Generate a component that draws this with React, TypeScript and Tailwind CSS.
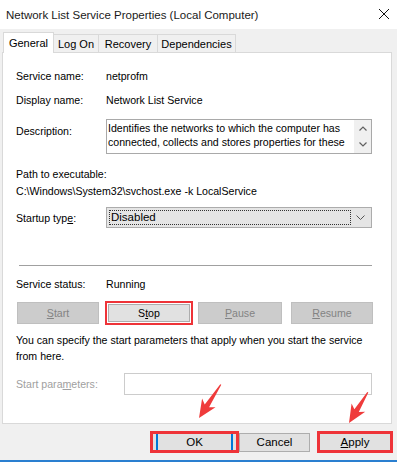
import React from 'react'

const Label = ({ children, className = '' }: { children: React.ReactNode; className?: string }) => (
  <div className={`w-[90px] shrink-0 ${className}`}>{children}</div>
)

function Arrow({ x, y, angle, len }: { x: number; y: number; angle: number; len: number }) {
  // arrow drawn pointing down with its tip at 0,0, then rotated into place
  return (
    <g transform={`translate(${x} ${y}) rotate(${angle})`}>
      <polygon
        points={`0,0 -8,-18 -2.6,-14.5 -0.6,-${len} 0.6,-${len} 2.6,-14.5 8,-18`}
        fill="#ef3b3b"
      />
    </g>
  )
}

export default function App() {
  return (
    <div className="relative w-[397px] h-[462px] overflow-hidden bg-[#f0f0f0] font-['Liberation_Sans',Arial,sans-serif] text-[10.6px] leading-[16px] text-black">
      {/* title bar */}
      <div className="flex h-[29px] items-center justify-between bg-white pl-[6px] pr-[7px]">
        <span className="text-[11.5px] text-[#1a1a1a]">Network List Service Properties (Local Computer)</span>
        <svg width="12" height="12" viewBox="0 0 12 12" className="mb-[2px]">
          <path d="M1 1L11 11M11 1L1 11" stroke="#111" strokeWidth="1" />
        </svg>
      </div>

      {/* tabs */}
      <div className="relative z-10 flex h-[23px] items-end pl-[3px] text-[11px]">
        <div className="-mb-px flex h-[21px] w-[51px] items-start justify-center border border-b-0 border-[#d9d9d9] bg-white pt-[2px]">
          General
        </div>
        <div className="flex h-[18px] w-[45px] items-center justify-center border-t border-r border-[#d9d9d9]">Log On</div>
        <div className="flex h-[18px] w-[59px] items-center justify-center border-t border-r border-[#d9d9d9]">Recovery</div>
        <div className="flex h-[18px] w-[78px] items-center justify-center border-t border-r border-[#d9d9d9]">Dependencies</div>
      </div>

      {/* panel */}
      <div className="ml-[2px] h-[372px] w-[390px] border border-[#d9d9d9] bg-white pl-[13px] pt-[15px]">
        <div className="flex h-[16px]">
          <Label>Service name:</Label>
          <span>netprofm</span>
        </div>
        <div className="mt-[8px] flex h-[16px]">
          <Label>Display name:</Label>
          <span>Network List Service</span>
        </div>
        <div className="mt-[11px] flex h-[35px]">
          <Label className="pt-[4px]">Description:</Label>
          <div className="flex w-[266px] border border-[#a9a9a9] bg-white">
            <div className="flex-1 pl-[1px] pt-px leading-[14px]">
              Identifies the networks to which the computer has
              <br />
              connected, collects and stores properties for these
            </div>
            <div className="flex w-[17px] flex-col items-center justify-between bg-[#f0f0f0] py-[6px]">
              <svg width="8" height="5" viewBox="0 0 8 5">
                <path d="M0.5 4.5L4 1L7.5 4.5" fill="none" stroke="#606060" strokeWidth="1.2" />
              </svg>
              <svg width="8" height="5" viewBox="0 0 8 5">
                <path d="M0.5 0.5L4 4L7.5 0.5" fill="none" stroke="#606060" strokeWidth="1.2" />
              </svg>
            </div>
          </div>
        </div>
        <div className="mt-[12px] h-[16px]">Path to executable:</div>
        <div className="h-[16px] pt-px">C:\Windows\System32\svchost.exe -k LocalService</div>
        <div className="mt-[9px] flex h-[21px]">
          <Label className="pt-[3px]">
            Startup typ<span className="underline">e</span>:
          </Label>
          <div className="flex w-[266px] items-center border border-[#acacac] bg-[#e5e5e5] px-[2px]">
            <div className="h-[15px] flex-1 border border-dotted border-[#333] pl-[1px] text-[11.5px] leading-[13px]">Disabled</div>
            <div className="flex w-[18px] justify-center">
              <svg width="9" height="5" viewBox="0 0 9 5">
                <path d="M0.5 0.5L4.5 4.5L8.5 0.5" fill="none" stroke="#555" strokeWidth="1" />
              </svg>
            </div>
          </div>
        </div>

        <div className="mt-[37px] ml-[3px] h-px w-[353px] bg-[#a0a0a0]" />

        <div className="mt-[10px] flex h-[16px]">
          <Label>Service status:</Label>
          <span>Running</span>
        </div>

        <div className="mt-[9px] flex h-[24px] items-center">
          <div className="ml-[1px] flex h-[22px] w-[82px] items-center justify-center border border-[#bfbfbf] bg-[#cccccc] text-[#838383]">
            <span><span className="underline">S</span>tart</span>
          </div>
          <div className="ml-[6px] flex h-[24px] w-[88px] items-center justify-center border-2 border-[#ee3338] p-px">
            <div className="flex h-full w-full items-center justify-center border border-[#adadad] bg-[#e1e1e1]">
              S<span className="underline">t</span>op
            </div>
          </div>
          <div className="ml-[5px] flex h-[22px] w-[84px] items-center justify-center border border-[#bfbfbf] bg-[#cccccc] text-[#838383]">
            <span><span className="underline">P</span>ause</span>
          </div>
          <div className="ml-[9px] flex h-[22px] w-[82px] items-center justify-center border border-[#bfbfbf] bg-[#cccccc] text-[#838383]">
            <span><span className="underline">R</span>esume</span>
          </div>
        </div>

        <div className="mt-[7px] leading-[16px]">
          You can specify the start parameters that apply when you start the service
          <br />
          from here.
        </div>

        <div className="mt-[9px] flex h-[22px] items-center">
          <div className="w-[108px] text-[#a0a0a0]">
            Start para<span className="underline">m</span>eters:
          </div>
          <div className="h-[22px] w-[248px] border border-[#cccccc] bg-white" />
        </div>
      </div>

      {/* dialog buttons */}
      <div className="mt-[7px] flex h-[22px] items-center pl-[150px] text-[11.5px]">
        <div className="flex h-[22px] w-[89px] items-center border-[3px] border-[#ee3338] bg-[#e1e1e1] px-[3px]">
          <div className="flex h-[16px] w-full items-center justify-center border-x-2 border-[#0078d7]">OK</div>
        </div>
        <div className="flex h-[19px] w-[71px] items-center justify-center border border-[#adadad] bg-[#e1e1e1]">
          Cancel
        </div>
        <div className="ml-[7px] flex h-[22px] w-[76px] items-center justify-center border-[3px] border-[#ee3338] bg-[#e1e1e1]">
          <span><span className="underline">A</span>pply</span>
        </div>
      </div>
      <div className="mt-[7px] h-[2px] w-full bg-[#2a7fd0]" />

      {/* annotation arrows */}
      <svg className="pointer-events-none absolute left-0 top-0" width="397" height="462">
        <Arrow x={199} y={418} angle={33} len={40} />
        <Arrow x={349} y={423} angle={31.5} len={36} />
      </svg>
    </div>
  )
}
